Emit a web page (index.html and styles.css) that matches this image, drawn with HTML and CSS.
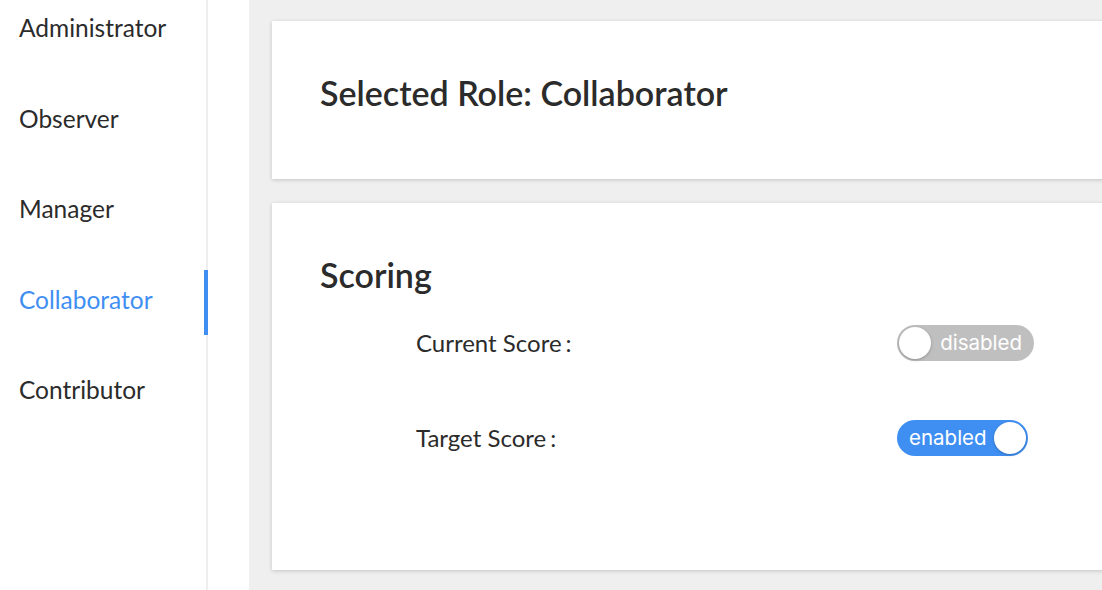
FILE: index.html
```html
<!DOCTYPE html>
<html>
<head>
<meta charset="utf-8">
<link rel="stylesheet" href="styles.css">
</head>
<body>
<div class="layout">
  <aside class="side">
    <ul class="menu">
      <li class="item">Administrator</li>
      <li class="item">Observer</li>
      <li class="item">Manager</li>
      <li class="item active">Collaborator</li>
      <li class="item">Contributor</li>
    </ul>
  </aside>
  <main class="main">
    <section class="card card-head">
      <h2 class="title">Selected Role: Collaborator</h2>
    </section>
    <section class="card card-body">
      <h2 class="title">Scoring</h2>
      <div class="row">
        <span class="label">Current Score<span class="colon">:</span></span>
        <span class="switch off"><span class="knob"></span><span class="stext">disabled</span></span>
      </div>
      <div class="row">
        <span class="label">Target Score<span class="colon">:</span></span>
        <span class="switch on"><span class="stext">enabled</span><span class="knob"></span></span>
      </div>
    </section>
  </main>
</div>
</body>
</html>
```

FILE: styles.css
```css
html, body {
  margin: 0;
  padding: 0;
  height: 100%;
  overflow: hidden;
}
body {
  font-family: Lato, "Open Sans", sans-serif;
  color: #2b2b2b;
  background: #efefef;
}
.layout {
  display: flex;
  height: 590px;
  overflow: hidden;
}
.side {
  width: 249px;
  flex: none;
  background: #fff;
  overflow: hidden;
}
.menu {
  list-style: none;
  margin: -17px 0 0 0;
  padding: 0;
  width: 206px;
  height: 640px;
  border-right: 2px solid #eeeeee;
}
.item {
  position: relative;
  height: 90.5px;
  line-height: 90.5px;
  padding-left: 19px;
  font-size: 24.5px;
}
.item.active {
  color: #3f8ff3;
}
.item.active::after {
  content: "";
  position: absolute;
  right: -2px;
  top: 15px;
  width: 4px;
  height: 65px;
  background: #3f8ff3;
}
.main {
  flex: 1;
  padding: 21px 0 0 23px;
  display: flex;
  flex-direction: column;
  gap: 24px;
  min-width: 0;
  overflow: hidden;
}
.card {
  background: #fff;
  box-shadow: 0 1px 4px rgba(0, 0, 0, 0.18);
  width: 1000px;
  flex: none;
  box-sizing: border-box;
  padding: 0 48px;
}
.card-head {
  height: 158px;
  padding-top: 48px;
}
.card-body {
  height: 367px;
  padding-top: 48px;
}
.title {
  margin: 0;
  font-size: 34px;
  font-weight: 600;
  line-height: 48px;
  color: #2b2b2b;
}
.row {
  display: flex;
  align-items: center;
  padding-left: 96px;
  height: 95px;
}
.card-body .row:first-of-type {
  margin-top: -4px;
}
.label {
  width: 481px;
  font-size: 24px;
}
.colon {
  margin-left: 4px;
}
.switch {
  display: inline-flex;
  align-items: center;
  justify-content: space-between;
  height: 36px;
  border-radius: 18px;
  box-sizing: border-box;
  padding: 2px;
  font-family: Inter, "Open Sans", sans-serif;
  font-size: 20.5px;
  color: #fff;
}
.switch.off {
  width: 137px;
  background: #bfbfbf;
}
.switch.on {
  width: 131px;
  background: #3f8ff3;
}
.knob {
  width: 32px;
  height: 32px;
  border-radius: 50%;
  background: #fff;
  box-shadow: 0 1px 3px rgba(0, 0, 0, 0.25);
  flex: none;
}
.off .stext {
  margin-left: 9px;
  margin-right: 10px;
}
.on .stext {
  margin-left: 10px;
  margin-right: 6px;
  white-space: nowrap;
}
```
